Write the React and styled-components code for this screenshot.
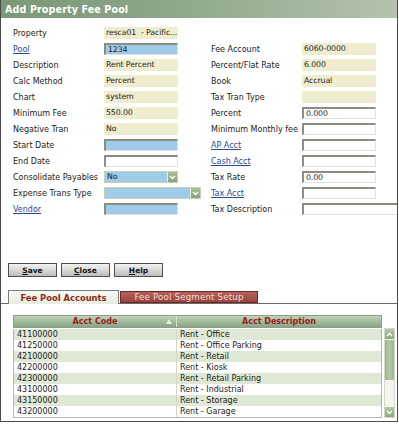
import React from 'react';
import styled, { createGlobalStyle } from 'styled-components';

const GlobalStyle = createGlobalStyle`
  html, body { margin: 0; padding: 0; background: #fff; }
  body { font-family: "DejaVu Sans", Verdana, sans-serif; }
`;

const Window = styled.div`
  width: 396px;
  height: 421px;
  border-left: 1px solid #4a4a4a;
  border-right: 1px solid #4a4a4a;
  border-bottom: 1px solid #4a4a4a;
  background: #fff;
  overflow: hidden;
  display: flex;
  flex-direction: column;
`;

const TitleBar = styled.div`
  height: 18px;
  display: flex;
  align-items: center;
  padding-left: 4px;
  background: linear-gradient(to right, #7a9876 0%, #8ea88a 45%, #b4c3ad 100%);
  color: #fff;
  font-weight: bold;
  font-size: 9.6px;
  letter-spacing: 0.1px;
`;

const Form = styled.div`
  display: grid;
  grid-template-columns: 91px 107px 91px 1fr;
  grid-auto-rows: 16px;
  align-items: center;
  padding: 7px 0 0 12px;
  font-size: 8px;
  color: #222;
`;

const Label = styled.span`
  white-space: nowrap;
  color: ${p => (p.$link ? '#2a4b8d' : '#222')};
  text-decoration: ${p => (p.$link ? 'underline' : 'none')};
`;

const Field = styled.div`
  box-sizing: border-box;
  height: 12px;
  width: ${p => p.$w || 74}px;
  padding-left: 2px;
  font-size: 7.8px;
  letter-spacing: -0.1px;
  white-space: pre;
  overflow: hidden;
  color: #222;
  background: ${p => (p.$kind === 'blue' ? '#a0cbe8' : p.$kind === 'input' ? '#fff' : '#efedd0')};
  border-top: ${p => (p.$kind === 'ro' ? 'none' : '2px solid #8c8c84')};
  border-left: ${p => (p.$kind === 'ro' ? 'none' : '2px solid #8c8c84')};
  border-right: ${p => (p.$kind === 'ro' ? 'none' : '1px solid #e2e2da')};
  border-bottom: ${p => (p.$kind === 'ro' ? 'none' : '1px solid #e2e2da')};
  line-height: ${p => (p.$kind === 'ro' ? '12px' : '9px')};
`;

const Select = styled.div`
  box-sizing: border-box;
  height: 12px;
  width: ${p => p.$w}px;
  display: flex;
  border: 1px solid #c6d4b6;
  background: #e9efe0;
`;

const SelectValue = styled.div`
  flex: 1;
  background: #a0cbe8;
  font-size: 7.8px;
  line-height: 10px;
  padding-left: 2px;
  margin-right: 1px;
`;

const SelectArrow = styled.div`
  width: 9px;
  background: linear-gradient(#a9bf98, #8aa578);
  display: flex;
  align-items: center;
  justify-content: center;
`;

const Buttons = styled.div`
  display: flex;
  gap: 4px;
  padding-left: 7px;
  margin-top: 46px;
`;

const Button = styled.div`
  box-sizing: border-box;
  width: 49px;
  height: 14px;
  border: 1px solid #4e4e4e;
  background: linear-gradient(#f2f2f2, #d9d9d9 50%, #bcbcbc);
  font-size: 7.5px;
  font-weight: bold;
  color: #111;
  display: flex;
  align-items: center;
  justify-content: center;
  u { text-decoration: underline; }
`;

const Tabs = styled.div`
  display: flex;
  align-items: flex-end;
  margin-top: 13px;
  height: 13px;
  padding-left: 7px;
  border-bottom: 1px solid #6a6a6a;
`;

const Tab = styled.div`
  box-sizing: border-box;
  height: ${p => (p.$active ? 14 : 12)}px;
  margin-bottom: ${p => (p.$active ? -1 : 0)}px;
  margin-right: 1px;
  width: ${p => (p.$active ? 111 : 138)}px;
  display: flex;
  align-items: center;
  justify-content: center;
  font-size: ${p => (p.$active ? 8.4 : 8.6)}px;
  white-space: nowrap;
  font-weight: ${p => (p.$active ? 'bold' : 'normal')};
  letter-spacing: ${p => (p.$active ? '0' : '0.2px')};
  color: ${p => (p.$active ? '#8e2a22' : '#f3dcd6')};
  background: ${p => (p.$active ? 'linear-gradient(#f6f8f3, #e6ecdf)' : 'linear-gradient(#b4625c, #9a4640)')};
  border: 1px solid ${p => (p.$active ? '#7c7c7c' : '#6a2a26')};
  border-bottom: ${p => (p.$active ? 'none' : '1px solid #6a2a26')};
`;

const TableArea = styled.div`
  display: flex;
  flex-direction: column;
  margin: 11px 0 0 12px;
  width: 382px;
`;

const HeaderRow = styled.div`
  display: grid;
  grid-template-columns: 163px 1fr;
  width: 369px;
  height: 13px;
  background: linear-gradient(#c2d3bc, #9db698 60%, #8aa585);
  border: 1px solid #8aa088;
  box-sizing: border-box;
`;

const HeaderCell = styled.div`
  position: relative;
  display: flex;
  align-items: center;
  justify-content: center;
  font-size: 8px;
  font-weight: bold;
  color: #9a1c1c;
  border-right: ${p => (p.$divider ? '1px solid #d8e2d2' : 'none')};
`;

const SortIcon = styled.span`
  position: absolute;
  right: 4px;
  top: 3px;
  width: 0;
  height: 0;
  border-left: 3px solid transparent;
  border-right: 3px solid transparent;
  border-bottom: 5px solid #e8ecd8;
`;

const BodyWrap = styled.div`
  display: flex;
  margin-top: 1px;
`;

const Body = styled.div`
  width: 369px;
  border: 1px solid #b4b4b4;
  border-top: none;
  box-sizing: border-box;
`;

const Row = styled.div`
  display: grid;
  grid-template-columns: 163px 1fr;
  height: 11px;
  font-size: 8px;
  line-height: 11px;
  color: #222;
  background: ${p => (p.$odd ? '#dfe8d4' : '#fff')};
`;

const Cell = styled.div`
  padding-left: 3px;
  white-space: nowrap;
  border-right: ${p => (p.$divider ? '1px solid #d2d8cc' : 'none')};
`;

const Scrollbar = styled.div`
  width: 11px;
  margin-left: 2px;
  margin-top: -1px;
  height: 90px;
  display: flex;
  flex-direction: column;
  background: #f3f4ee;
  border: 1px solid #d4d8cc;
  box-sizing: border-box;
`;

const ScrollBtn = styled.div`
  height: 10px;
  background: linear-gradient(#b5c8a4, #8fa97c);
  display: flex;
  align-items: center;
  justify-content: center;
`;

const Thumb = styled.div`
  height: 40px;
  margin-top: 1px;
  background: linear-gradient(to right, #9fb58c, #b6c8a4, #9fb58c);
  border-radius: 1px;
`;

const Track = styled.div`
  flex: 1;
`;

const Chevron = ({ up }) => (
  <svg width="7" height="5" viewBox="0 0 7 5">
    <path d={up ? 'M1 4 L3.5 1.5 L6 4' : 'M1 1 L3.5 3.5 L6 1'} fill="none" stroke="#fff" strokeWidth="1.4" />
  </svg>
);

const formRows = [
  [{ label: 'Property', value: 'resca01  - Pacific...', kind: 'ro' }, null],
  [{ label: 'Pool', link: true, value: '1234', kind: 'blue' }, { label: 'Fee Account', value: '6060-0000', kind: 'ro' }],
  [{ label: 'Description', value: 'Rent Percent', kind: 'ro' }, { label: 'Percent/Flat Rate', value: '6.000', kind: 'ro' }],
  [{ label: 'Calc Method', value: 'Percent', kind: 'ro' }, { label: 'Book', value: 'Accrual', kind: 'ro' }],
  [{ label: 'Chart', value: 'system', kind: 'ro' }, { label: 'Tax Tran Type', value: '', kind: 'ro' }],
  [{ label: 'Minimum Fee', value: '550.00', kind: 'ro' }, { label: 'Percent', value: '0.000', kind: 'input' }],
  [{ label: 'Negative Tran', value: 'No', kind: 'ro' }, { label: 'Minimum Monthly fee', value: '', kind: 'input' }],
  [{ label: 'Start Date', value: '', kind: 'blue' }, { label: 'AP Acct', link: true, value: '', kind: 'input' }],
  [{ label: 'End Date', value: '', kind: 'input' }, { label: 'Cash Acct', link: true, value: '', kind: 'input' }],
  [{ label: 'Consolidate Payables', value: 'No', kind: 'select', w: 74 }, { label: 'Tax Rate', value: '0.00', kind: 'input' }],
  [{ label: 'Expense Trans Type', value: '', kind: 'select', w: 97 }, { label: 'Tax Acct', link: true, value: '', kind: 'input' }],
  [{ label: 'Vendor', link: true, value: '', kind: 'blue' }, { label: 'Tax Description', value: '', kind: 'input', w: 110 }],
];

const accounts = [
  ['41100000', 'Rent - Office'],
  ['41250000', 'Rent - Office Parking'],
  ['42100000', 'Rent - Retail'],
  ['42200000', 'Rent - Kiosk'],
  ['42300000', 'Rent - Retail Parking'],
  ['43100000', 'Rent - Industrial'],
  ['43150000', 'Rent - Storage'],
  ['43200000', 'Rent - Garage'],
];

function FieldCell({ item }) {
  if (item.kind === 'select') {
    return (
      <Select $w={item.w}>
        <SelectValue>{item.value}</SelectValue>
        <SelectArrow><Chevron /></SelectArrow>
      </Select>
    );
  }
  return <Field $kind={item.kind} $w={item.w}>{item.value}</Field>;
}

function FormPair({ item }) {
  if (!item) {
    return (
      <>
        <span />
        <span />
      </>
    );
  }
  return (
    <>
      <Label $link={item.link}>{item.label}</Label>
      <FieldCell item={item} />
    </>
  );
}

export default function App() {
  return (
    <Window>
      <GlobalStyle />
      <TitleBar>Add Property Fee Pool</TitleBar>
      <Form>
        {formRows.map(([left, right], i) => (
          <React.Fragment key={i}>
            <FormPair item={left} />
            <FormPair item={right} />
          </React.Fragment>
        ))}
      </Form>
      <Buttons>
        <Button><u>S</u>ave</Button>
        <Button><u>C</u>lose</Button>
        <Button><u>H</u>elp</Button>
      </Buttons>
      <Tabs>
        <Tab $active>Fee Pool Accounts</Tab>
        <Tab>Fee Pool Segment Setup</Tab>
      </Tabs>
      <TableArea>
        <HeaderRow>
          <HeaderCell $divider>Acct Code<SortIcon /></HeaderCell>
          <HeaderCell>Acct Description</HeaderCell>
        </HeaderRow>
        <BodyWrap>
          <Body>
            {accounts.map(([code, desc], i) => (
              <Row key={code} $odd={i % 2 === 0}>
                <Cell $divider>{code}</Cell>
                <Cell>{desc}</Cell>
              </Row>
            ))}
          </Body>
          <Scrollbar>
            <ScrollBtn><Chevron up /></ScrollBtn>
            <Thumb />
            <Track />
            <ScrollBtn><Chevron /></ScrollBtn>
          </Scrollbar>
        </BodyWrap>
      </TableArea>
    </Window>
  );
}
